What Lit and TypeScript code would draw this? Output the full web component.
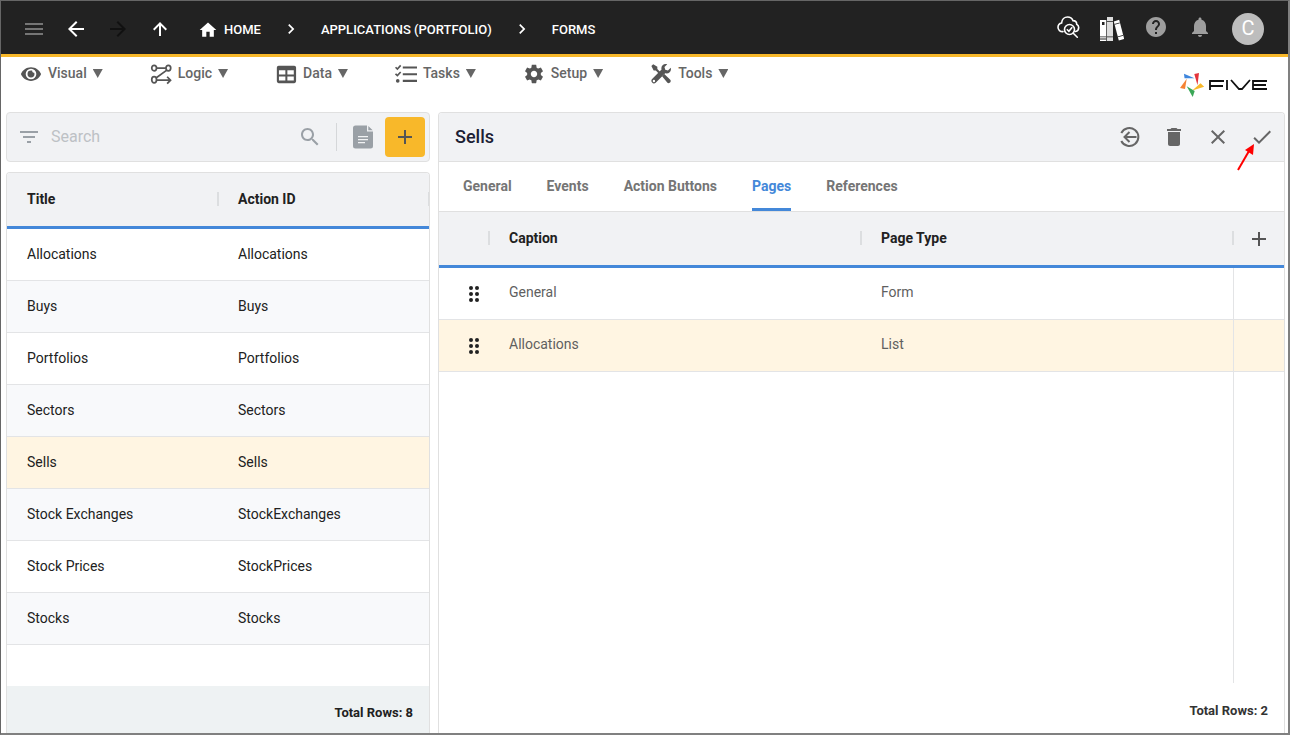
import { LitElement, html, css, svg } from "lit";
import { customElement, state } from "lit/decorators.js";

type Row = [string, string];

const NAV = ["Visual", "Logic", "Data", "Tasks", "Setup", "Tools"];

const ACTIONS: Row[] = [
  ["Allocations", "Allocations"],
  ["Buys", "Buys"],
  ["Portfolios", "Portfolios"],
  ["Sectors", "Sectors"],
  ["Sells", "Sells"],
  ["Stock Exchanges", "StockExchanges"],
  ["Stock Prices", "StockPrices"],
  ["Stocks", "Stocks"],
];

const PAGES: Row[] = [
  ["General", "Form"],
  ["Allocations", "List"],
];

const TABS = ["General", "Events", "Action Buttons", "Pages", "References"];

const GLYPHS: Record<string, unknown> = {
  menu: svg`<path d="M3 18h18v-2H3v2zm0-5h18v-2H3v2zm0-7v2h18V6H3z"/>`,
  back: svg`<path d="M20 11H7.83l5.59-5.59L12 4l-8 8 8 8 1.41-1.41L7.83 13H20v-2z"/>`,
  forward: svg`<path d="M12 4l-1.41 1.41L16.17 11H4v2h12.17l-5.58 5.59L12 20l8-8z"/>`,
  up: svg`<path d="M5 12l1.41 1.41L11 8.83V19h2V8.83l4.58 4.59L19 12l-7-7z"/>`,
  home: svg`<path d="M10 20v-6h4v6h5v-8h3L12 3 2 12h3v8z"/>`,
  chevron: svg`<path d="M10 6L8.59 7.41 13.17 12l-4.58 4.59L10 18l6-6z"/>`,
  help: svg`<path d="M12 2C6.48 2 2 6.48 2 12s4.48 10 10 10 10-4.48 10-10S17.52 2 12 2zm1 17h-2v-2h2v2zm2.07-7.75l-.9.92C13.45 12.9 13 13.5 13 15h-2v-.5c0-1.1.45-2.1 1.17-2.83l1.24-1.26c.37-.36.59-.86.59-1.41 0-1.1-.9-2-2-2s-2 .9-2 2H8c0-2.21 1.79-4 4-4s4 1.79 4 4c0 .88-.36 1.68-.93 2.25z"/>`,
  bell: svg`<path d="M12 22c1.1 0 2-.9 2-2h-4c0 1.1.89 2 2 2zm6-6v-5c0-3.07-1.64-5.64-4.5-6.32V4c0-.83-.67-1.5-1.5-1.5s-1.5.67-1.5 1.5v.68C7.63 5.36 6 7.92 6 11v5l-2 2v1h16v-1l-2-2z"/>`,
  cloud: svg`<g fill="none" stroke="currentColor" stroke-width="1.6" stroke-linecap="round"><path d="M7 16.600C4.200 16.800 2 15 2 12.300c0-2.200 1.500-3.900 3.600-4.300C5.900 4.300 8.500 2 11.600 2c2.600 0 4.500 1.400 5.400 3.600 2.400.1 3.700 1.700 3.700 3.600 1.300.7 2 1.800 2 3.200 0 2.100-1.300 3.600-3.200 4.100"/><circle cx="13.500" cy="14.500" r="5"/><path d="M17.300 18.300l4 3.900M11.300 14.700l1.600 1.600 2.900-3.600"/></g>`,
  books: svg`<path d="M0 3h6.3v21H0z"/><path d="M7 0h6v24H7z" fill="#ddd"/><path d="M13.8 4.4l5.4-1.6 5 19.2-5.4 1.6z"/><path d="M2 5h2.5v3H2zM0 19.5h6.3v.8H0zM0 21.6h6.3v.8H0zM7 4h6v.8H7zM7 19.5h6v.8H7zM14.4 7l5.3-1.5.2.8-5.3 1.5zM17.6 19.5l5.4-1.5.2.8-5.4 1.5z" fill="#222"/>`,
  Visual: svg`<path d="M12 4.500C7 4.500 2.730 7.610 1 12c1.730 4.390 6 7.500 11 7.500s9.270-3.110 11-7.500c-1.730-4.390-6-7.500-11-7.500zm0 13.300a5.800 5.800 0 1 1 0-11.600 5.800 5.800 0 0 1 0 11.600zM12 8.200a3.800 3.800 0 1 0 3.800 3.800c0-.5-.1-1-.3-1.500a1.700 1.700 0 0 1-2.100-2.100c-.4-.1-.9-.2-1.400-.2z"/>`,
  Logic: svg`<g fill="none" stroke="currentColor" stroke-width="1.900"><ellipse cx="4.500" cy="5.500" rx="2.600" ry="3"/><ellipse cx="20" cy="5.500" rx="2.600" ry="3"/><ellipse cx="4.500" cy="18.300" rx="2.600" ry="3.400"/><path d="M7 5.500h10.300M18 8L6.500 16.300M7 18.800h14.500M18.700 15l3.700 3.800-3.700 3.700"/></g>`,
  Data: svg`<path fill-rule="evenodd" d="M4 3h17a2 2 0 0 1 2 2v15a2 2 0 0 1-2 2H4a2 2 0 0 1-2-2V5a2 2 0 0 1 2-2zm.300 5v4.500h7V8zm9.200 0v4.500h7V8zM4.300 14.700v4.500h7v-4.500zm9.200 0v4.500h7v-4.500z"/>`,
  Tasks: svg`<g fill="none" stroke="currentColor"><path stroke-width="2.200" d="M8.500 5H24M8.500 12.200H24M8.500 19.500H24"/><path stroke-width="1.800" d="M.6 4.600l2 2 3.600-4M.6 11.800l2 2 3.600-4"/></g><circle cx="3" cy="19.500" r="2"/>`,
  Setup: svg`<path d="M19.430 12.980c.04-.32.070-.64.070-.98s-.03-.66-.07-.98l2.110-1.650c.19-.15.24-.42.12-.64l-2-3.460c-.12-.22-.39-.3-.61-.22l-2.490 1c-.52-.4-1.080-.73-1.690-.98l-.38-2.650C14.460 2.180 14.250 2 14 2h-4c-.25 0-.46.18-.49.42l-.38 2.650c-.61.25-1.170.59-1.690.98l-2.490-1c-.23-.09-.49 0-.61.22l-2 3.460c-.13.22-.07.49.12.64l2.110 1.650c-.04.32-.07.65-.07.98s.03.66.07.98l-2.110 1.650c-.19.15-.24.42-.12.64l2 3.460c.12.22.39.3.61.22l2.490-1c.52.4 1.080.73 1.690.98l.38 2.650c.03.24.24.42.49.42h4c.25 0 .46-.18.49-.42l.38-2.650c.61-.25 1.170-.59 1.690-.98l2.490 1c.23.090.49 0 .61-.22l2-3.460c.12-.22.070-.49-.12-.64l-2.110-1.650zM12 15.500c-1.930 0-3.500-1.570-3.500-3.500s1.570-3.500 3.500-3.500 3.500 1.570 3.500 3.500-1.570 3.500-3.500 3.500z"/>`,
  Tools: svg`<path d="M1.500 3.300L3.500 1.400 8 4.200v2.400l4.200 4.200-1.700 1.700L6.300 8.200H4zM13.200 14.500l2.400-2.400 6.500 6.300c1.700 1.900-1.200 4.800-3.100 3.100z"/><path d="M22.600 5.200l-3 3-3-.8-.8-3 3-3c-4-1.200-7.300 2.100-6.200 5.800L2.300 17.500c-2.500 2.600 1.300 6.500 3.900 4L16.600 11.200c4 1 7.200-2.300 6-6zM4.300 20.900a1.300 1.300 0 1 1 0-2.600 1.300 1.300 0 0 1 0 2.600z"/>`,
  filter: svg`<path d="M10 18h4v-2h-4v2zM3 6v2h18V6H3zm3 7h12v-2H6v2z"/>`,
  search: svg`<path d="M15.500 14h-.79l-.28-.27C15.410 12.590 16 11.110 16 9.500 16 5.910 13.090 3 9.500 3S3 5.910 3 9.500 5.910 16 9.500 16c1.610 0 3.090-.59 4.230-1.570l.27.28v.79l5 4.990L20.490 19l-4.990-5zm-6 0C7.010 14 5 11.990 5 9.500S7.010 5 9.500 5 14 7.010 14 9.500 11.990 14 9.500 14z"/>`,
  doc: svg`<path d="M4.500.5H16v6h6V21a2.500 2.500 0 0 1-2.500 2.500h-15A2.500 2.500 0 0 1 2 21V3A2.500 2.500 0 0 1 4.500.5zM17.300 1l4.400 4.300h-4.400z"/><path d="M7 11.700h10M7 14.700h10M7 17.700h7" stroke="#f1f2f4" stroke-width="1.300"/>`,
  add: svg`<path d="M19 13h-6v6h-2v-6H5v-2h6V5h2v6h6v2z"/>`,
  exit: svg`<g fill="none" stroke="currentColor" stroke-width="2"><path d="M3.300 8a9 9 0 1 1 0 8M18.500 12H6.500M11.500 7L6.500 12l5 5"/></g>`,
  trash: svg`<path d="M6 19c0 1.100.9 2 2 2h8c1.100 0 2-.9 2-2V7H6v12zM19 4h-3.500l-1-1h-5l-1 1H5v2h14V4z"/>`,
  close: svg`<path d="M19 6.410L17.590 5 12 10.590 6.410 5 5 6.410 10.590 12 5 17.590 6.410 19 12 13.410 17.590 19 19 17.590 13.410 12z"/>`,
  check: svg`<path d="M9 16.170L4.830 12l-1.420 1.410L9 19 21 7l-1.410-1.410z"/>`,
  drag: svg`<circle cx="9" cy="6" r="2"/><circle cx="15" cy="6" r="2"/><circle cx="9" cy="12" r="2"/><circle cx="15" cy="12" r="2"/><circle cx="9" cy="18" r="2"/><circle cx="15" cy="18" r="2"/>`,
};

const icon = (name: string, size = "m") =>
  html`<svg class="icon ${size}" viewBox="0 0 24 24" fill="currentColor" aria-hidden="true">${GLYPHS[name]}</svg>`;

@customElement("app-root")
export class AppRoot extends LitElement {
  @state() private tab = "Pages";
  @state() private selected = "Sells";

  static styles = css`
    :host {
      display: flex;
      flex-direction: column;
      box-sizing: border-box;
      height: 100vh;
      border: 1px solid #666;
      border-right: 2px solid #808080;
      border-bottom: 2px solid #808080;
      background: #fff;
      color: #212121;
      font: 14px/20px Roboto, sans-serif;
    }
    * { box-sizing: border-box; }
    button, input {
      font: inherit;
      color: inherit;
      border: 0;
      margin: 0;
      padding: 0;
      background: none;
    }
    button { cursor: pointer; }
    .icon { display: block; flex: none; width: 24px; height: 24px; }
    .icon.s { width: 20px; height: 20px; }

    .topbar {
      display: flex;
      align-items: center;
      justify-content: space-between;
      flex: none;
      height: 56px;
      padding: 0 24px 0 21px;
      border-bottom: 3px solid #f8b82a;
      background: #222;
      color: #fff;
    }
    .trail { display: flex; align-items: center; padding-top: 4px; }
    .trail .tools { display: flex; gap: 18px; margin-right: 26px; padding-bottom: 2px; }
    .trail .muted { color: #757575; }
    .trail .off { color: #111; }
    .trail a {
      display: flex;
      align-items: center;
      gap: 6px;
      color: #fff;
      font-size: 13px;
      font-weight: 500;
      text-decoration: none;
    }
    .trail .sep { margin: 0 20px; padding-bottom: 2px; }
    .account { display: flex; align-items: center; gap: 20px; }
    .account button { padding-bottom: 1px; color: #9e9e9e; }
    .account .bright { color: #fff; }
    .account .library { padding: 2px 0 0; }
    .account .avatar {
      width: 32px;
      height: 32px;
      margin-top: 2px;
      border-radius: 50%;
      background: #bdbdbd;
      color: #fff;
      font-size: 20px;
    }

    .menubar {
      display: flex;
      justify-content: space-between;
      flex: none;
      height: 55px;
      padding: 0 20px 0 19px;
    }
    .menu { display: flex; gap: 47px; align-items: flex-start; padding-top: 6px; }
    .menu button {
      display: flex;
      align-items: flex-start;
      gap: 6px;
      color: #666;
      font-weight: 500;
    }
    .menu .icon { color: #555; width: 22px; height: 22px; }
    .caret {
      width: 10px;
      height: 9px;
      margin-top: 6px;
      background: #666;
      clip-path: polygon(0 0, 100% 0, 50% 100%);
    }
    .brand { width: 89px; height: 26px; margin-top: 15px; }

    .work {
      display: grid;
      grid-template-columns: 424fr 847fr;
      gap: 8px;
      flex: 1;
      min-height: 0;
      padding: 0 3px 0 5px;
    }
    .side { display: flex; flex-direction: column; gap: 10px; min-height: 0; }
    .searchbar {
      display: flex;
      align-items: center;
      flex: none;
      height: 50px;
      padding: 0 4px 0 10px;
      border: 1px solid #e0e0e0;
      border-radius: 4px;
      background: #f1f2f4;
      color: #9aa0a6;
    }
    .searchbar input {
      flex: 1;
      min-width: 0;
      padding: 0 10px;
      font-size: 16px;
      outline: 0;
    }
    .searchbar input::placeholder { color: #bdc1c5; opacity: 1; }
    .searchbar .rule { width: 1px; height: 28px; margin: 0 14px; background: #d5d7d9; }
    .searchbar .add {
      display: grid;
      place-items: center;
      width: 40px;
      height: 40px;
      margin-left: 10px;
      border-radius: 4px;
      background: #f8b82a;
      color: #555;
    }
    .panel {
      display: flex;
      flex-direction: column;
      flex: 1;
      min-height: 0;
      overflow: hidden;
      border: 1px solid #e0e0e0;
      border-bottom: 0;
      border-radius: 4px 4px 0 0;
    }

    table { width: 100%; border-collapse: separate; border-spacing: 0; table-layout: fixed; }
    th, td { padding: 0 20px; text-align: left; }
    th {
      height: 56px;
      padding-bottom: 1px;
      border-bottom: 3px solid #4488d9;
      background: #f1f2f4;
      font-weight: 700;
    }
    .head { display: flex; align-items: center; justify-content: space-between; margin-right: -21px; }
    .head::after { content: ""; width: 2px; height: 14px; background: #dcdee0; }
    td { height: 52px; border-bottom: 1px solid #e3e4e6; }
    .list td { padding-bottom: 2px; }
    .list tr:nth-child(even) td { background: #f8f9fb; }
    .list tr.on td, .pages tr.on td { background: #fff5e2; }
    .total { font-size: 13px; font-weight: 700; text-align: right; }
    .side .total { margin-top: auto; height: 47px; padding: 17px 16px 0; background: #eef2f3; }

    .titlebar {
      display: flex;
      align-items: center;
      justify-content: space-between;
      flex: none;
      height: 49px;
      padding: 0 10px 0 16px;
      border-bottom: 1px solid #e0e0e0;
      background: #f1f2f4;
    }
    h1 { margin: 0; color: #1b2033; font-size: 18px; font-weight: 500; }
    .commands { display: flex; gap: 20px; color: #666; }
    .commands .apply { position: relative; }
    .pointer { position: absolute; left: -13px; top: 18px; width: 20px; height: 30px; }
    .tabs {
      display: flex;
      gap: 35px;
      flex: none;
      height: 50px;
      padding: 0 24px;
      border-bottom: 1px solid #e0e0e0;
    }
    .tabs button { padding-top: 2px; border-bottom: 3px solid transparent; color: #757575; font-weight: 700; }
    .tabs .on { border-color: #4488d9; color: #4488d9; }
    .pages .grip { width: 50px; padding-right: 0; }
    .pages .grip .head { margin-right: -1px; justify-content: flex-end; }
    .pages .plus { width: 51px; padding: 0 0 0 14px; }
    .pages .plus button { display: block; color: #555; }
    .pages td { padding-bottom: 3px; color: #5f5f5f; }
    .pages td.grip { padding: 0 0 0 23px; color: #222; }
    .pages td.plus, .filler { border-left: 1px solid #e3e4e6; }
    .filler { flex: 1; width: 51px; margin-left: auto; }
    .detail .total { flex: none; padding: 18px 16px 12px; color: #333; }
  `;

  private nav() {
    return html`
      <header class="topbar">
        <nav class="trail" aria-label="Breadcrumb">
          <div class="tools">
            <button class="muted" aria-label="Menu">${icon("menu")}</button>
            <button aria-label="Back">${icon("back")}</button>
            <button class="off" aria-label="Forward" disabled>${icon("forward")}</button>
            <button aria-label="Up">${icon("up")}</button>
          </div>
          <a href="#home">${icon("home", "s")}HOME</a>
          <span class="sep">${icon("chevron", "s")}</span>
          <a href="#applications">APPLICATIONS (PORTFOLIO)</a>
          <span class="sep">${icon("chevron", "s")}</span>
          <a href="#forms">FORMS</a>
        </nav>
        <div class="account">
          <button class="bright" aria-label="Inspect">${icon("cloud")}</button>
          <button class="bright library" aria-label="Library">${icon("books")}</button>
          <button aria-label="Help">${icon("help")}</button>
          <button aria-label="Notifications">${icon("bell")}</button>
          <button class="avatar" aria-label="Account">C</button>
        </div>
      </header>
      <div class="menubar">
        <nav class="menu" aria-label="Main">
          ${NAV.map((n) => html`<button>${icon(n)}${n}<span class="caret"></span></button>`)}
        </nav>
        <svg class="brand" viewBox="0 0 89 26" role="img" aria-label="Five">
          <path d="M5 1.700L15.500 6.300 5.500 6.300z" fill="#3f86dc" />
          <path d="M15.300 2L20 1l-1.500 12.200z" fill="#e4343b" />
          <path d="M7.700 6.800L6 17l-5-1z" fill="#f58233" />
          <path d="M21.500 11.200L25.200 14.700l-12 3.700z" fill="#f8b82a" />
          <path d="M7.700 14.200L15.700 19l-2 5.900z" fill="#3aa757" />
          <g fill="none" stroke="#111" stroke-width="1.800">
            <path d="M31 18V9h14M31 14h13M48 8v10M52 8l8 9h3l8-9M88 9H74v8h14M74 13h13" />
          </g>
        </svg>
      </div>
    `;
  }

  render() {
    return html`
      ${this.nav()}
      <main class="work">
        <section class="side">
          <div class="searchbar">
            ${icon("filter")}
            <input type="search" placeholder="Search" aria-label="Search" />
            ${icon("search")}
            <span class="rule"></span>
            <button aria-label="Report">${icon("doc")}</button>
            <button class="add" aria-label="Add">${icon("add")}</button>
          </div>
          <div class="panel">
            <table class="list">
              <thead>
                <tr><th><div class="head">Title</div></th><th><div class="head">Action ID</div></th></tr>
              </thead>
              <tbody>
                ${ACTIONS.map(
                  ([title, id]) => html`<tr
                    class=${title === this.selected ? "on" : ""}
                    @click=${() => (this.selected = title)}
                  ><td>${title}</td><td>${id}</td></tr>`
                )}
              </tbody>
            </table>
            <div class="total">Total Rows: ${ACTIONS.length}</div>
          </div>
        </section>
        <section class="panel detail">
          <div class="titlebar">
            <h1>Sells</h1>
            <div class="commands">
              <button aria-label="Leave">${icon("exit")}</button>
              <button aria-label="Delete">${icon("trash")}</button>
              <button aria-label="Cancel">${icon("close")}</button>
              <button class="apply" aria-label="Save">
                ${icon("check")}
                <svg class="pointer" viewBox="0 0 20 30" aria-hidden="true">
                  <path d="M1 27L12 8" stroke="#f00" stroke-width="2" />
                  <path d="M17 1l-1 11-8-5z" fill="#f00" />
                </svg>
              </button>
            </div>
          </div>
          <div class="tabs" role="tablist">
            ${TABS.map(
              (t) => html`<button
                role="tab"
                aria-selected=${t === this.tab}
                class=${t === this.tab ? "on" : ""}
                @click=${() => (this.tab = t)}
              >${t}</button>`
            )}
          </div>
          <table class="pages">
            <thead>
              <tr>
                <th class="grip"><div class="head"></div></th>
                <th><div class="head">Caption</div></th>
                <th><div class="head">Page Type</div></th>
                <th class="plus"><button aria-label="Add page">${icon("add")}</button></th>
              </tr>
            </thead>
            <tbody>
              ${PAGES.map(
                ([caption, type], i) => html`<tr class=${i === 1 ? "on" : ""}>
                  <td class="grip">${icon("drag")}</td><td>${caption}</td><td>${type}</td><td class="plus"></td>
                </tr>`
              )}
            </tbody>
          </table>
          <div class="filler"></div>
          <div class="total">Total Rows: ${PAGES.length}</div>
        </section>
      </main>
    `;
  }
}
